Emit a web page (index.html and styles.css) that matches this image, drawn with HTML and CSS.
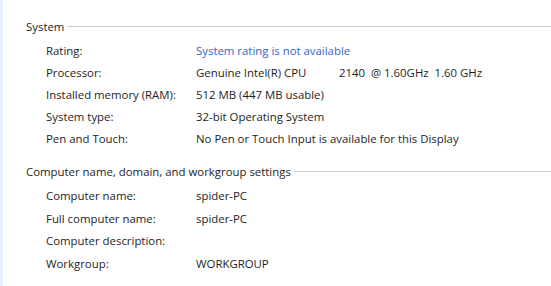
FILE: index.html
```html
<!DOCTYPE html>
<html lang="en">
<head>
    <meta charset="UTF-8">
    <title>System</title>
    <link rel="stylesheet" href="styles.css">
</head>
<body>
    <div class="strip"></div>
    <div class="content">
        <div class="section">
            <div class="section-title"><span>System</span></div>
            <div class="row"><div class="label">Rating:</div><div class="value link">System rating is not available</div></div>
            <div class="row"><div class="label">Processor:</div><div class="value pre">Genuine Intel(R) CPU           2140  @ 1.60GHz  1.60 GHz</div></div>
            <div class="row"><div class="label">Installed memory (RAM):</div><div class="value">512 MB (447 MB usable)</div></div>
            <div class="row"><div class="label">System type:</div><div class="value">32-bit Operating System</div></div>
            <div class="row"><div class="label">Pen and Touch:</div><div class="value">No Pen or Touch Input is available for this Display</div></div>
        </div>
        <div class="section">
            <div class="section-title"><span>Computer name, domain, and workgroup settings</span></div>
            <div class="row wide"><div class="label">Computer name:</div><div class="value">spider-PC</div></div>
            <div class="row wide"><div class="label">Full computer name:</div><div class="value">spider-PC</div></div>
            <div class="row wide"><div class="label">Computer description:</div><div class="value"></div></div>
            <div class="row wide"><div class="label">Workgroup:</div><div class="value">WORKGROUP</div></div>
        </div>
    </div>
</body>
</html>
```

FILE: styles.css
```css
body {
    margin: 0;
    display: flex;
    height: 286px;
    overflow: hidden;
    background: #fff;
    font-family: "Open Sans", sans-serif;
    font-size: 11.4px;
    color: #1e1e1e;
}
.strip {
    width: 3px;
    background-color: #e8f0fb;
    flex: none;
}
.content {
    flex: 1;
    padding: 16px 0 0 23px;
}
.section {
    margin-bottom: 12px;
}
.section-title {
    display: flex;
    align-items: center;
    height: 20px;
    margin-bottom: 3px;
}
.section-title::after {
    content: "";
    flex: 1;
    border-top: 1px solid #cfcfcf;
    margin-left: 3px;
}
.row {
    display: flex;
    height: 22px;
    align-items: center;
    padding-left: 20px;
}
.row.wide {
    height: 22.7px;
}
.label {
    width: 150px;
    flex: none;
}
.link {
    color: #3366cc;
}
.pre {
    white-space: pre;
}
```
